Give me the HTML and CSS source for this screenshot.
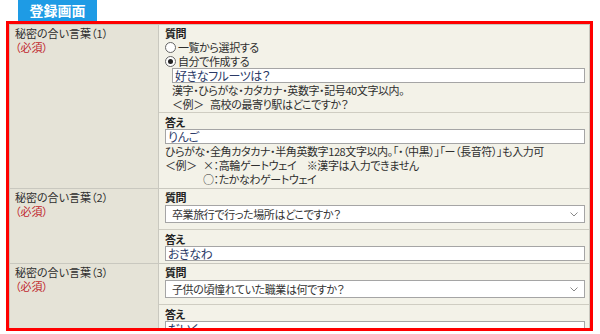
FILE: index.html
```html
<!DOCTYPE html>
<html lang="ja">
<head>
  <meta charset="UTF-8" />
  <meta name="viewport" content="width=device-width, initial-scale=1.0" />
  <title>登録画面</title>
  <link rel="stylesheet" href="styles.css">
</head>
<body>
  <div class="tab">登録画面</div>
  <div class="frame">
    <table class="form">
      <tr>
        <th>秘密の合い言葉（1）<br><span class="req">（必須）</span></th>
        <td>
          <div class="part">
            <div class="head">質問</div>
            <div class="opt"><span class="radio"></span>一覧から選択する</div>
            <div class="opt"><span class="radio on"></span>自分で作成する</div>
            <div class="indent">
              <div class="input">好きなフルーツは？</div>
              <div>漢字・ひらがな・カタカナ・英数字・記号40文字以内。</div>
              <div class="ex"><span class="ex-label">＜例＞</span><span>高校の最寄り駅はどこですか？</span></div>
            </div>
          </div>
          <div class="part answer">
            <div class="head">答え</div>
            <div class="input">りんご</div>
            <div>ひらがな・全角カタカナ・半角英数字128文字以内。「・（中黒）」「ー（長音符）」も入力可</div>
            <div class="ex"><span class="ex-label">＜例＞</span><span>×：高輪ゲートウェイ　※漢字は入力できません<br>○：たかなわゲートウェイ</span></div>
          </div>
        </td>
      </tr>
      <tr>
        <th>秘密の合い言葉（2）<br><span class="req">（必須）</span></th>
        <td>
          <div class="part">
            <div class="head">質問</div>
            <div class="select">
              <span>卒業旅行で行った場所はどこですか？</span>
              <svg width="8" height="5" viewBox="0 0 8 5"><path d="M0.5 0.5 L4 4 L7.5 0.5" fill="none" stroke="#888" stroke-width="1"/></svg>
            </div>
          </div>
          <div class="part answer">
            <div class="head">答え</div>
            <div class="input">おきなわ</div>
          </div>
        </td>
      </tr>
      <tr>
        <th>秘密の合い言葉（3）<br><span class="req">（必須）</span></th>
        <td>
          <div class="part">
            <div class="head">質問</div>
            <div class="select">
              <span>子供の頃憧れていた職業は何ですか？</span>
              <svg width="8" height="5" viewBox="0 0 8 5"><path d="M0.5 0.5 L4 4 L7.5 0.5" fill="none" stroke="#888" stroke-width="1"/></svg>
            </div>
          </div>
          <div class="part answer">
            <div class="head">答え</div>
            <div class="input">だいく</div>
          </div>
        </td>
      </tr>
    </table>
  </div>
</body>
</html>
```

FILE: styles.css
```css
body { margin: 0; background: #fff; color: #2e2e2e; font-family: "Noto Sans CJK JP", sans-serif; font-size: 11px; line-height: 14px; font-feature-settings: "palt"; }
.tab { margin-left: 18px; width: 79px; height: 21px; background: #1e9be5; color: #fff; font-size: 14px; font-weight: bold; line-height: 21px; text-align: center; }
.frame { margin-left: 6px; width: 587px; height: 310px; box-sizing: border-box; border: 3px solid #f00; overflow: hidden; background: #f3f2e8; }
.form { width: 100%; border-collapse: collapse; border: 1px solid #b4b3ab; }
.form th { width: 143px; padding: 1px 0 0 5px; vertical-align: top; text-align: left; font-weight: normal; background: #e5e3d7; border: 1px solid #c9c8bf; }
.form td { padding: 0; vertical-align: top; background: #f3f2e8; border: 1px solid #c9c8bf; }
.req { color: #c0272d; }
.part { padding: 1px 4px 1px 6px; letter-spacing: -0.4px; }
.answer { padding-top: 2px; padding-bottom: 2px; border-top: 1px solid #cfcdc2; }
.head { font-weight: bold; color: #222; }
.opt { display: flex; align-items: center; }
.radio { width: 11px; height: 11px; margin-right: 2px; border: 1px solid #666; border-radius: 50%; background: #fff; box-sizing: border-box; position: relative; }
.radio.on::after { content: ""; position: absolute; left: 2px; top: 2px; width: 5px; height: 5px; border-radius: 50%; background: #222; }
.indent { padding-left: 7px; }
.input { height: 15px; box-sizing: border-box; padding-left: 2px; border: 1px solid #a5a5a5; background: #fff; color: #2b3a67; font-size: 12px; line-height: 13px; }
.select { display: flex; align-items: center; justify-content: space-between; height: 18px; margin: 1px 0 5px; padding: 0 6px 0 6px; box-sizing: border-box; border: 1px solid #a5a5a5; background: #fff; color: #333; font-size: 11px; }
.ex { display: flex; }
.ex-label { width: 38px; flex: none; }
```
